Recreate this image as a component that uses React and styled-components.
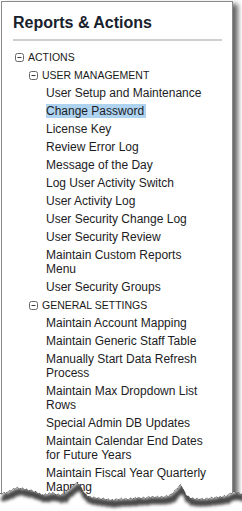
import styled, { createGlobalStyle } from 'styled-components';

const TREE = [
  {
    label: 'ACTIONS',
    groups: [
      {
        label: 'USER MANAGEMENT',
        items: [
          'User Setup and Maintenance',
          'Change Password',
          'License Key',
          'Review Error Log',
          'Message of the Day',
          'Log User Activity Switch',
          'User Activity Log',
          'User Security Change Log',
          'User Security Review',
          'Maintain Custom Reports Menu',
          'User Security Groups',
        ],
      },
      {
        label: 'GENERAL SETTINGS',
        items: [
          'Maintain Account Mapping',
          'Maintain Generic Staff Table',
          'Manually Start Data Refresh Process',
          'Maintain Max Dropdown List Rows',
          'Special Admin DB Updates',
          'Maintain Calendar End Dates for Future Years',
          'Maintain Fiscal Year Quarterly Mapping',
          'Maintain Fiscal Year Setup',
        ],
      },
    ],
  },
];

const SELECTED = 'Change Password';

// rough outline of the torn bottom edge, in page coordinates
const TEAR = [
  [0, 494], [4, 493], [8, 492], [12, 490], [16, 488], [20, 488], [24, 489],
  [28, 490], [32, 491], [36, 492], [40, 494], [44, 495], [48, 494], [52, 493],
  [56, 494], [60, 495], [64, 494], [68, 490], [72, 487], [75, 484], [78, 483],
  [80, 486], [83, 491], [86, 495], [90, 497], [96, 498], [104, 499], [112, 500],
  [120, 499], [128, 499], [136, 498], [144, 498], [150, 497], [156, 497],
  [162, 497], [168, 496], [172, 494], [176, 490], [179, 486], [181, 485],
  [183, 489], [186, 495], [190, 498], [196, 499], [204, 499], [212, 498],
  [220, 497], [226, 496], [230, 494], [233, 492], [242, 494],
];

const TEAR_TOP = 476;

function jagged() {
  const out = [];
  for (let i = 0; i < TEAR.length - 1; i++) {
    const [x1, y1] = TEAR[i];
    const [x2, y2] = TEAR[i + 1];
    for (let x = x1; x < x2; x += 1.5) {
      const t = (x - x1) / (x2 - x1);
      const n = Math.round(x / 1.5);
      const wobble = n % 3 === 0 ? -0.8 : n % 3 === 1 ? 0.6 : 0;
      out.push([x, y1 + (y2 - y1) * t + wobble - TEAR_TOP]);
    }
  }
  out.push([242, 494 - TEAR_TOP]);
  return out;
}

const GlobalStyle = createGlobalStyle`
  html, body {
    margin: 0;
    padding: 0;
    background: #fff;
  }
  body {
    font-family: 'Liberation Sans', Arial, sans-serif;
  }
`;

function ToggleIcon() {
  return (
    <IconSvg viewBox="0 0 9 9" width="9" height="9">
      <rect x="0.5" y="0.5" width="8" height="8" rx="2" fill="#fff" stroke="#666" />
      <line x1="2.5" y1="4.5" x2="6.5" y2="4.5" stroke="#3c3c3c" />
    </IconSvg>
  );
}

function TornEdge() {
  const pts = jagged();
  const line = pts.map(([x, y]) => `${x.toFixed(1)},${y.toFixed(1)}`).join(' ');
  const below = `${line} 242,35 0,35`;
  return (
    <TearSvg width="242" height="35" viewBox="0 0 242 35">
      <defs>
        <filter id="tearBlur" x="-10%" y="-50%" width="120%" height="200%">
          <feGaussianBlur stdDeviation="1.8" />
        </filter>
        <clipPath id="belowTear">
          <polygon points={below} />
        </clipPath>
      </defs>
      <polygon points={below} fill="#fff" />
      <g clipPath="url(#belowTear)">
        <polyline
          points={line}
          transform="translate(2 4)"
          fill="none"
          stroke="#4a4a4a"
          strokeWidth="6"
          filter="url(#tearBlur)"
        />
      </g>
      <polyline points={line} fill="none" stroke="#222" strokeWidth="0.7" strokeDasharray="1.2 0.6" />
    </TearSvg>
  );
}

function App() {
  return (
    <Page>
      <GlobalStyle />
      <Panel>
        <Title>Reports &amp; Actions</Title>
        <Tree>
          {TREE.map((root) => (
            <div key={root.label}>
              <GroupRow>
                <ToggleIcon />
                <GroupLabel>{root.label}</GroupLabel>
              </GroupRow>
              {root.groups.map((group) => (
                <div key={group.label}>
                  <GroupRow $level={1}>
                    <ToggleIcon />
                    <GroupLabel>{group.label}</GroupLabel>
                  </GroupRow>
                  <Items>
                    {group.items.map((item) => (
                      <Item key={item}>
                        <ItemLabel $selected={item === SELECTED}>{item}</ItemLabel>
                      </Item>
                    ))}
                  </Items>
                </div>
              ))}
            </div>
          ))}
        </Tree>
      </Panel>
      <TornEdge />
    </Page>
  );
}

const Page = styled.div`
  position: relative;
  width: 242px;
  height: 511px;
  overflow: hidden;
  background: #fff;
`;

const Panel = styled.div`
  margin: 1px 0 0 1px;
  width: 232px;
  height: 520px;
  box-sizing: border-box;
  padding: 0 10px 0 11px;
  border: 1px solid #8a8a8a;
  box-shadow: 5px 3px 5px rgba(0, 0, 0, 0.6);
  background: #fff;
`;

const Title = styled.div`
  padding: 11px 0 6px 0;
  font-size: 16px;
  line-height: 20px;
  font-weight: bold;
  color: #17212c;
  border-bottom: 2px solid #cfcfcf;
`;

const Tree = styled.div`
  padding-top: 7px;
`;

const GroupRow = styled.div`
  display: flex;
  align-items: center;
  gap: 4px;
  padding: 2px 0 2px ${({ $level }) => ($level ? 16 : 2)}px;
  line-height: 14px;
`;

const IconSvg = styled.svg`
  flex: none;
  display: block;
`;

const GroupLabel = styled.span`
  font-size: 10.5px;
  color: #1a1a1a;
`;

const Items = styled.div`
  padding-left: 33px;
`;

const Item = styled.div`
  width: 166px;
  padding: 2px 0;
  font-size: 12px;
  line-height: 14px;
  color: #1c1c24;
`;

const ItemLabel = styled.span`
  background: ${({ $selected }) => ($selected ? '#aed3f0' : 'transparent')};
  padding-right: ${({ $selected }) => ($selected ? '2px' : '0')};
`;

const TearSvg = styled.svg`
  position: absolute;
  left: 0;
  top: ${TEAR_TOP}px;
  display: block;
`;

export default App;
